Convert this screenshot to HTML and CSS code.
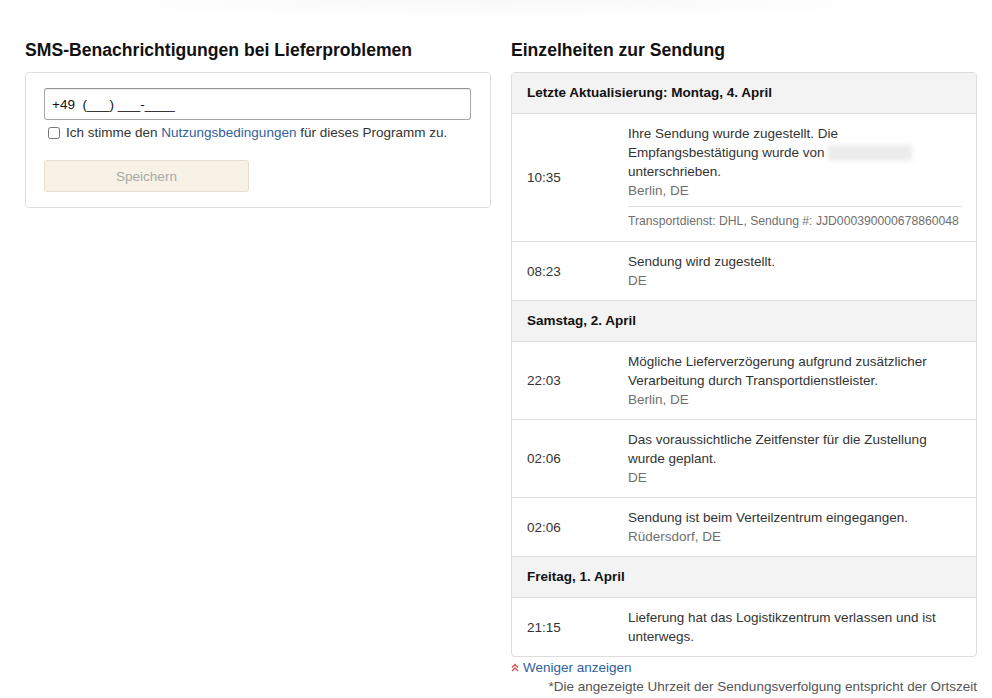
FILE: index.html
```html
<!DOCTYPE html>
<html lang="de">
  <head>
    <meta charset="UTF-8" />
    <meta name="viewport" content="width=device-width, initial-scale=1.0" />
    <title>Sendungsverfolgung</title>
    <link rel="stylesheet" href="styles.css">
  </head>
  <body>
    <div class="top-fade"></div>
    <main class="page">
      <!-- SMS -->
      <section class="column">
        <h2 class="heading">SMS-Benachrichtigungen bei Lieferproblemen</h2>
        <div class="box sms-box">
          <input class="phone" type="text" value="+49  (___) ___-____" />
          <label class="agree">
            <input type="checkbox" />
            <span>Ich stimme den <a href="#">Nutzungsbedingungen</a> für dieses Programm zu.</span>
          </label>
          <button class="save" disabled>Speichern</button>
        </div>
      </section>

      <!-- Sendung -->
      <section class="column">
        <h2 class="heading">Einzelheiten zur Sendung</h2>
        <div class="box events">
          <div class="day">Letzte Aktualisierung: Montag, 4. April</div>
          <div class="event">
            <div class="time">10:35</div>
            <div class="desc">
              Ihre Sendung wurde zugestellt. Die Empfangsbestätigung wurde von <span class="blurred"></span> unterschrieben.
              <div class="place">Berlin, DE</div>
              <div class="carrier">Transportdienst: DHL, Sendung #: JJD000390000678860048</div>
            </div>
          </div>
          <div class="event">
            <div class="time">08:23</div>
            <div class="desc">
              Sendung wird zugestellt.
              <div class="place">DE</div>
            </div>
          </div>

          <div class="day">Samstag, 2. April</div>
          <div class="event">
            <div class="time">22:03</div>
            <div class="desc">
              Mögliche Lieferverzögerung aufgrund zusätzlicher Verarbeitung durch Transportdienstleister.
              <div class="place">Berlin, DE</div>
            </div>
          </div>
          <div class="event">
            <div class="time">02:06</div>
            <div class="desc">
              Das voraussichtliche Zeitfenster für die Zustellung wurde geplant.
              <div class="place">DE</div>
            </div>
          </div>
          <div class="event">
            <div class="time">02:06</div>
            <div class="desc">
              Sendung ist beim Verteilzentrum eingegangen.
              <div class="place">Rüdersdorf, DE</div>
            </div>
          </div>

          <div class="day">Freitag, 1. April</div>
          <div class="event">
            <div class="time">21:15</div>
            <div class="desc">
              Lieferung hat das Logistikzentrum verlassen und ist unterwegs.
            </div>
          </div>
        </div>

        <a class="less" href="#">
          <svg class="chevrons" width="8" height="9" viewBox="0 0 8 9">
            <path d="M1 4.5 L4 1.5 L7 4.5 M1 8 L4 5 L7 8" fill="none" stroke="#d9534f" stroke-width="1.4" />
          </svg>
          Weniger anzeigen
        </a>
        <p class="note">*Die angezeigte Uhrzeit der Sendungsverfolgung entspricht der Ortszeit</p>
      </section>
    </main>
  </body>
</html>
```

FILE: styles.css
```css
* {
  margin: 0;
  padding: 0;
  box-sizing: border-box;
}

body {
  background: #fff;
  color: #111;
  font-family: "Liberation Sans", Arial, sans-serif;
  font-size: 13.5px;
  line-height: 19px;
}

a {
  color: #2f5f9e;
  text-decoration: none;
}

.top-fade {
  height: 20px;
  background: radial-gradient(ellipse 45% 100% at 50% 0, #f8f8f8, rgba(255, 255, 255, 0));
}

.page {
  display: grid;
  grid-template-columns: 466px 466px;
  gap: 20px;
  padding: 19px 15px 0 25px;
}

.heading {
  font-size: 17.6px;
  line-height: 22px;
  font-weight: bold;
  color: #111;
  margin-bottom: 11px;
}

.box {
  border: 1px solid #ddd;
  border-radius: 4px;
}

/* SMS box */

.sms-box {
  margin-top: 1px;
  padding: 15px 19px 15px 18px;
}

.phone {
  display: block;
  width: 100%;
  height: 32px;
  padding: 0 7px;
  border: 1px solid #a6a6a6;
  border-top-color: #949494;
  border-radius: 3px;
  box-shadow: inset 0 1px 0 rgba(0, 0, 0, 0.07);
  font-family: inherit;
  font-size: 13.5px;
  color: #111;
}

.agree {
  display: flex;
  align-items: center;
  gap: 6px;
  margin-top: 3px;
  padding-left: 4px;
  color: #333;
}

.agree input {
  width: 12px;
  height: 12px;
  margin: 0;
}

.save {
  display: block;
  width: 205px;
  height: 32px;
  margin-top: 18px;
  border: 1px solid #e6dfcd;
  border-radius: 3px;
  background: #f7f2e5;
  color: #a8a8a8;
  font-family: inherit;
  font-size: 13.5px;
}

/* events */

.day {
  padding: 10px 15px 11px;
  background: #f3f3f3;
  font-weight: bold;
  color: #111;
}

.events > div + div {
  border-top: 1px solid #ddd;
}

.event {
  display: grid;
  grid-template-columns: 116px 1fr;
  align-items: center;
  padding: 10px 14px 10px 0;
}

.time {
  padding-left: 15px;
  color: #333;
}

.desc {
  color: #333;
}

.place {
  color: #6f6f6f;
}

.blurred {
  display: inline-block;
  width: 84px;
  height: 16px;
  vertical-align: -4px;
  background: #ececec;
  filter: blur(2px);
}

.carrier {
  margin-top: 6px;
  padding-top: 5px;
  border-top: 1px solid #ddd;
  font-size: 12.2px;
  color: #6f6f6f;
}

.less {
  display: inline-flex;
  align-items: center;
  gap: 4px;
  margin-top: 1px;
}

.note {
  text-align: right;
  color: #555;
}
```
